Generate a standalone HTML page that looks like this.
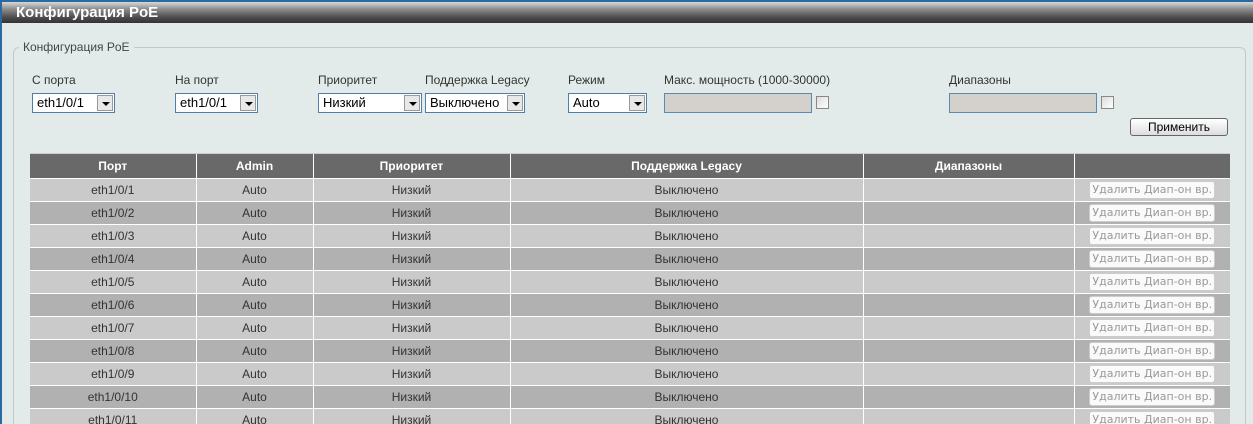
<!DOCTYPE html>
<html><head><meta charset="utf-8"><style>
*{box-sizing:border-box;margin:0;padding:0}
html,body{width:1253px;height:424px;overflow:hidden}
body{background:#e3ebea;font-family:"Liberation Sans",Arial,sans-serif;font-size:12px;color:#333}
.wrap{position:relative;width:1253px;height:424px;overflow:hidden}
.frame{position:absolute;left:0;top:0;width:1253px;height:424px;border-left:2px solid #2a6a9e;border-top:2px solid #2a6a9e}
.title{position:absolute;left:2px;top:2px;width:1251px;height:21px;background:linear-gradient(#d8d8d8 0%,#8a8a8a 35%,#4a4a4a 75%,#333 100%);color:#fff;font-weight:bold;font-size:15px;line-height:21px;padding-left:14px}
.fs{position:absolute;left:13px;top:47px;width:1233px;height:377px;border:1px solid #c2c9c8;border-bottom:none;border-radius:6px 6px 0 0}
.legend{position:absolute;left:19px;top:40px;background:#e3ebea;padding:0 4px;color:#444;font-size:12px}
.lbl{position:absolute;top:73px;font-size:12px;color:#333}
.sel{position:absolute;top:93px;height:20px;border:1px solid #4f7fa8;background:#fff;font-size:13px;line-height:18px;padding-left:4px;color:#000}
.sel i{position:absolute;right:1px;top:1px;width:16px;height:16px;background:#e8e8e8;border:1px solid #999}
.sel i:after{content:"";position:absolute;left:4px;top:6px;border-left:4px solid transparent;border-right:4px solid transparent;border-top:4px solid #000}
.inp{position:absolute;top:93px;height:20px;border:1px solid #5a8ab0;background:#d4d0cb}
.cb{position:absolute;top:96px;width:13px;height:13px;border:1px solid #888;background:linear-gradient(135deg,#ddd,#fff)}
.btn{position:absolute;left:1130px;top:118px;width:98px;height:18px;border:1px solid #666;border-radius:3px;background:linear-gradient(#fff,#ddd);font-size:12px;text-align:center;line-height:16px;color:#000}
.tw{position:absolute;left:30px;top:153px;width:1200px;height:271px;overflow:hidden}
table{width:1200px;border-collapse:collapse;table-layout:fixed}
th{background:#696969;color:#fff;font-weight:bold;height:25px;border-left:1px solid #fff;border-top:1px solid #ccc;font-size:12px}
td{height:23px;text-align:center;border-left:1px solid #fff;border-top:1px solid #fff;color:#333;font-size:12px}
tr:first-child th:first-child,td:first-child{border-left:none}
tr.a td{background:#cacaca}tr.b td{background:#b1b1b1}
.db{display:inline-block;width:126px;height:18px;border:1px solid #ccc;border-radius:3px;background:#fafafa;color:#999;font-family:"DejaVu Sans",sans-serif;font-size:11px;line-height:16px;text-align:center}
</style></head><body><div class="wrap">
<div class="frame"></div>
<div class="title">Конфигурация PoE</div>
<div class="fs"></div>
<div class="legend">Конфигурация PoE</div>
<div class="lbl" style="left:32px">С порта</div>
<div class="lbl" style="left:175px">На порт</div>
<div class="lbl" style="left:318px">Приоритет</div>
<div class="lbl" style="left:425px">Поддержка Legacy</div>
<div class="lbl" style="left:568px">Режим</div>
<div class="lbl" style="left:664px">Макс. мощность (1000-30000)</div>
<div class="lbl" style="left:949px">Диапазоны</div>
<div class="sel" style="left:32px;width:83px">eth1/0/1<i></i></div>
<div class="sel" style="left:175px;width:83px">eth1/0/1<i></i></div>
<div class="sel" style="left:318px;width:104px">Низкий<i></i></div>
<div class="sel" style="left:425px;width:100px">Выключено<i></i></div>
<div class="sel" style="left:568px;width:79px">Auto<i></i></div>
<div class="inp" style="left:664px;width:148px"></div>
<div class="cb" style="left:816px"></div>
<div class="inp" style="left:949px;width:148px"></div>
<div class="cb" style="left:1101px"></div>
<div class="btn">Применить</div>
<div class="tw"><table>
<colgroup><col style="width:166px"><col style="width:117px"><col style="width:197px"><col style="width:353px"><col style="width:211px"><col style="width:156px"></colgroup>
<tr><th>Порт</th><th>Admin</th><th>Приоритет</th><th>Поддержка Legacy</th><th>Диапазоны</th><th></th></tr>
<tr class="a"><td>eth1/0/1</td><td>Auto</td><td>Низкий</td><td>Выключено</td><td></td><td><span class="db">Удалить Диап-он вр.</span></td></tr>
<tr class="b"><td>eth1/0/2</td><td>Auto</td><td>Низкий</td><td>Выключено</td><td></td><td><span class="db">Удалить Диап-он вр.</span></td></tr>
<tr class="a"><td>eth1/0/3</td><td>Auto</td><td>Низкий</td><td>Выключено</td><td></td><td><span class="db">Удалить Диап-он вр.</span></td></tr>
<tr class="b"><td>eth1/0/4</td><td>Auto</td><td>Низкий</td><td>Выключено</td><td></td><td><span class="db">Удалить Диап-он вр.</span></td></tr>
<tr class="a"><td>eth1/0/5</td><td>Auto</td><td>Низкий</td><td>Выключено</td><td></td><td><span class="db">Удалить Диап-он вр.</span></td></tr>
<tr class="b"><td>eth1/0/6</td><td>Auto</td><td>Низкий</td><td>Выключено</td><td></td><td><span class="db">Удалить Диап-он вр.</span></td></tr>
<tr class="a"><td>eth1/0/7</td><td>Auto</td><td>Низкий</td><td>Выключено</td><td></td><td><span class="db">Удалить Диап-он вр.</span></td></tr>
<tr class="b"><td>eth1/0/8</td><td>Auto</td><td>Низкий</td><td>Выключено</td><td></td><td><span class="db">Удалить Диап-он вр.</span></td></tr>
<tr class="a"><td>eth1/0/9</td><td>Auto</td><td>Низкий</td><td>Выключено</td><td></td><td><span class="db">Удалить Диап-он вр.</span></td></tr>
<tr class="b"><td>eth1/0/10</td><td>Auto</td><td>Низкий</td><td>Выключено</td><td></td><td><span class="db">Удалить Диап-он вр.</span></td></tr>
<tr class="a"><td>eth1/0/11</td><td>Auto</td><td>Низкий</td><td>Выключено</td><td></td><td><span class="db">Удалить Диап-он вр.</span></td></tr>
</table></div>
</div></body></html>
